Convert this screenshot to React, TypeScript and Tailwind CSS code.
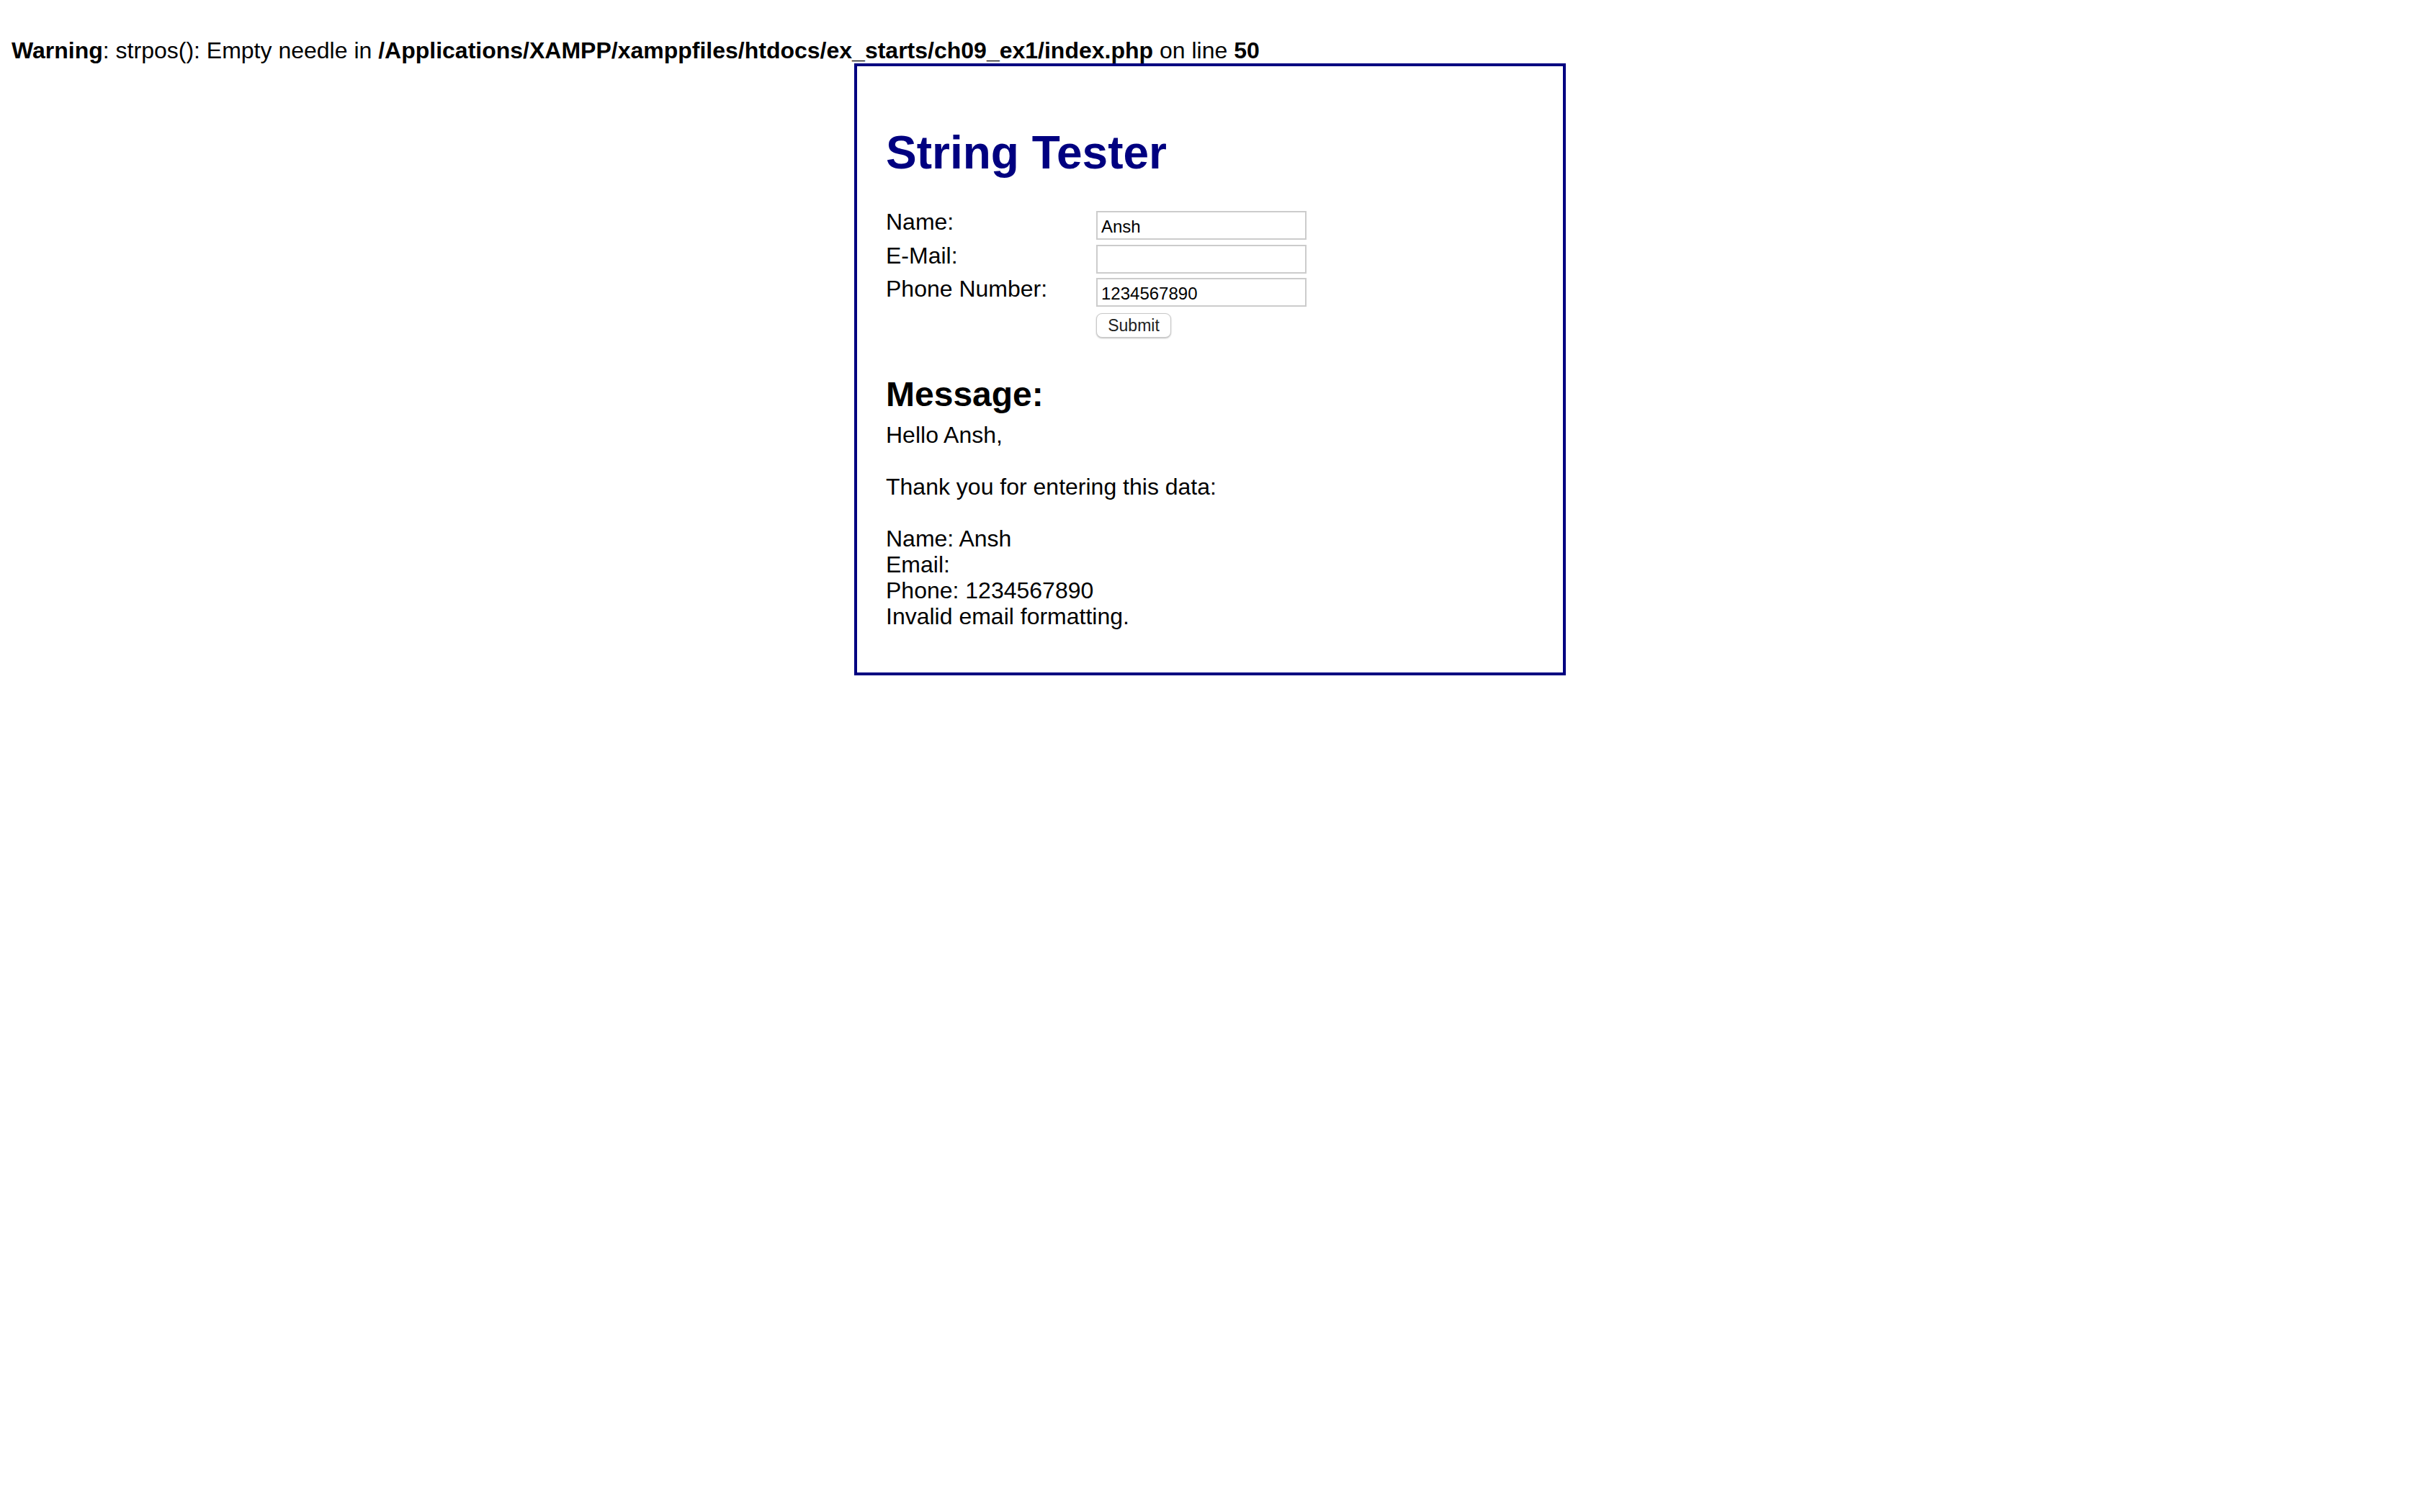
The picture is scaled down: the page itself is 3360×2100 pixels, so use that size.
import React from "react";

const font = { fontFamily: '"Liberation Sans", Arial, Helvetica, sans-serif' };

function Row({ label, value }: { label: string; value: string }) {
  return (
    <div className="flex items-start">
      <label className="-mt-[3px] w-[292px] shrink-0 text-[32px] leading-[36px] text-black">{label}</label>
      <input
        readOnly
        value={value}
        className="w-[292px] h-[40px] border-2 border-[#cccccc] bg-white pl-[5px] pt-[4px] text-[24px] text-black outline-none"
        style={font}
      />
    </div>
  );
}

export default function App() {
  return (
    <div className="min-h-screen bg-white p-[16px] text-black" style={font}>
      <div className="text-[32px] leading-[36px]">
        <br />
        <b>Warning</b>: strpos(): Empty needle in{" "}
        <b>/Applications/XAMPP/xamppfiles/htdocs/ex_starts/ch09_ex1/index.php</b> on line <b>50</b>
      </div>
      <main className="mx-auto w-[988px] border-4 border-[#000080] bg-white px-[40px] pt-[40px] pb-[40px]">
        <h1 className="mt-[43px] mb-[44px] text-[64px] font-bold leading-[74px] text-[#000080]">
          String Tester
        </h1>
        <div className="flex flex-col gap-[6.5px]">
          <Row label="Name:" value="Ansh" />
          <Row label="E-Mail:" value="" />
          <Row label="Phone Number:" value="1234567890" />
        </div>
        <div className="mt-[9px] ml-[292px]">
          <button
            className="h-[34px] w-[104px] rounded-[8px] border border-[#c8c8c8] bg-white text-[23px] leading-[30px] text-[#222] shadow-[0_1px_2px_rgba(0,0,0,0.25)]"
            style={font}
          >
            Submit
          </button>
        </div>
        <h2 className="mt-[51px] mb-[11px] text-[48px] font-bold leading-[55px]">Message:</h2>
        <p className="mb-[20px] text-[32px] leading-[36px]">
          Hello Ansh,
          <br />
          <br />
          Thank you for entering this data:
          <br />
          <br />
          Name: Ansh
          <br />
          Email:
          <br />
          Phone: 1234567890
          <br />
          Invalid email formatting.
        </p>
      </main>
    </div>
  );
}
